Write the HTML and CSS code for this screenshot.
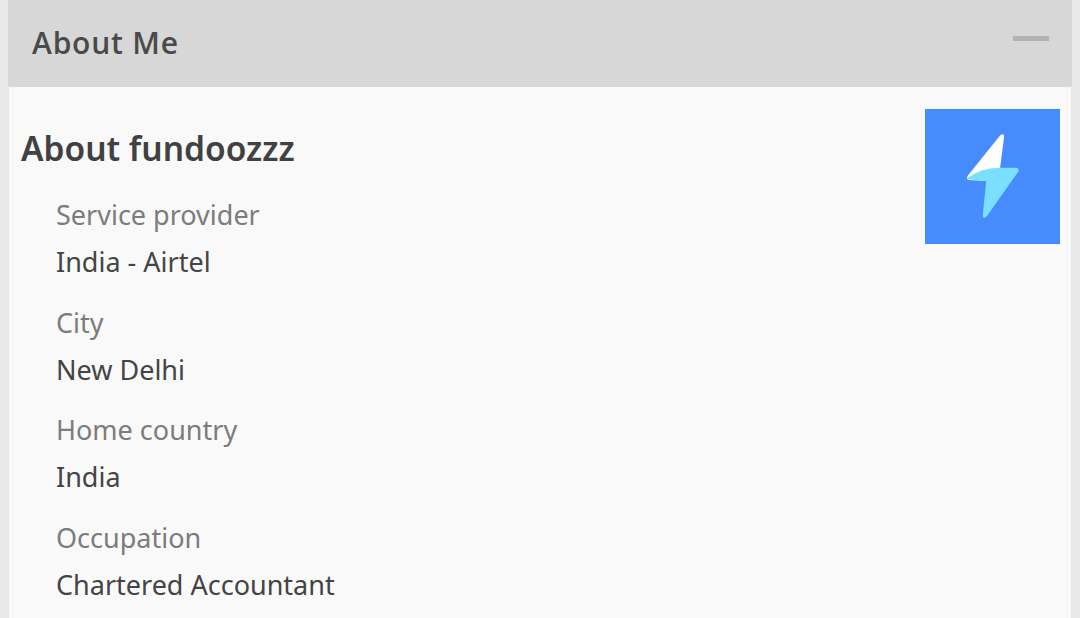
FILE: index.html
```html
<!DOCTYPE html>
<html lang="en">
<head>
<meta charset="utf-8">
<title>About Me</title>
<link rel="stylesheet" href="styles.css">
</head>
<body>
<section class="panel">
  <header class="panel-head">
    <h2 class="panel-title">About Me</h2>
    <span class="collapse"></span>
  </header>
  <div class="panel-body">
    <div class="avatar">
      <svg viewBox="0 0 135 135" width="135" height="135" aria-hidden="true">
        <rect width="135" height="135" fill="#468cff"/>
        <path d="M76 27 Q78.500 25 78 28.500 L74 59.500 L62 71 L44 70 Q42 69.500 43.500 67.500 Z" fill="#ffffff" stroke="#ffffff" stroke-width="2" stroke-linejoin="round"/>
        <path d="M43 69.500 Q56 60 74 59.500 L91 59.500 Q94 60 92.500 62.500 L61 107 Q58.500 109.500 58.500 106 L62 71.500 Z" fill="#7be0ff" stroke="#7be0ff" stroke-width="1.500" stroke-linejoin="round"/>
      </svg>
    </div>
    <h3 class="about-title">About fundoozzz</h3>
    <dl class="facts">
      <dt>Service provider</dt>
      <dd>India - Airtel</dd>
      <dt>City</dt>
      <dd>New Delhi</dd>
      <dt>Home country</dt>
      <dd>India</dd>
      <dt>Occupation</dt>
      <dd>Chartered Accountant</dd>
    </dl>
  </div>
</section>
</body>
</html>
```
FILE: styles.css
```css
html, body {
  margin: 0;
  padding: 0;
  height: 618px;
  overflow: hidden;
  background: #e9e9e9;
}

body {
  padding: 0 8px;
  font-family: "Noto Sans", sans-serif;
  color: #444;
}

.panel {
  height: 618px;
  overflow: hidden;
}

.panel-head {
  height: 87px;
  background: #d7d7d7;
  display: flex;
  align-items: flex-start;
  justify-content: space-between;
  padding: 0 23px 0 24px;
}

.panel-title {
  margin: 0;
  padding-top: 22px;
  font: 600 30px/42px "Open Sans", sans-serif;
  letter-spacing: 0.8px;
  color: #4a4a4a;
}

.collapse {
  width: 36px;
  height: 5px;
  margin-top: 36px;
  background: #b3b3b3;
}

.panel-body {
  margin: 0 1px;
  height: 531px;
  background: #f9f9f9;
  padding: 22px 11px 0 12px;
}

.avatar {
  float: right;
  width: 135px;
  height: 135px;
}

.avatar svg {
  display: block;
}

.about-title {
  margin: 0;
  padding-top: 19px;
  font: 600 33.500px/41px "Noto Sans", sans-serif;
  color: #414141;
}

.facts {
  margin: 0;
  padding: 22px 0 0 35px;
}

.facts dt {
  font-size: 27px;
  line-height: 47px;
  color: #7c7c7c;
}

.facts dd {
  margin: 0 0 13.670px;
  font-size: 27px;
  line-height: 47px;
  color: #444;
}
```
